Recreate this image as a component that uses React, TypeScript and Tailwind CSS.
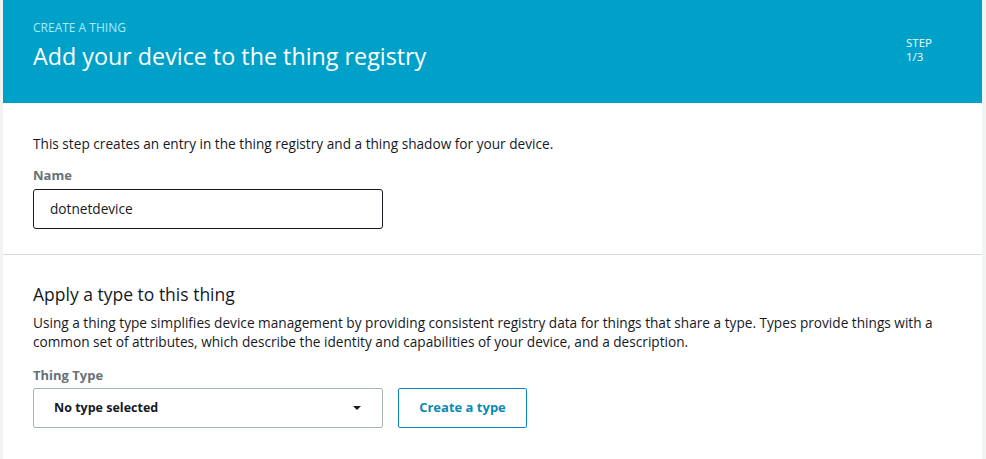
import React from 'react'

const font = { fontFamily: '"Open Sans", "Noto Sans", Arial, sans-serif' }

export default function App() {
  return (
    <div className="w-[986px] h-[459px] bg-[#f2f3f3] px-[3px] overflow-hidden" style={font}>
      <div className="h-full bg-white mr-[1px]">
        {/* Header */}
        <div className="h-[103px] bg-[#00a1c9] flex justify-between pl-[30px] pr-[50px]">
          <div className="pt-[20px]">
            <div className="text-[12px] leading-[16px] text-[#a6ecfb] uppercase">Create a thing</div>
            <h1 className="mt-[5px] text-[23.3px] leading-[30px] text-white">Add your device to the thing registry</h1>
          </div>
          <div className="pt-[36px] text-[11.5px] leading-[14px] text-[#effbfe]">
            <div>STEP</div>
            <div>1/3</div>
          </div>
        </div>

        {/* Name section */}
        <div className="px-[30px] pt-[32px] pb-[25px] border-b border-[#d5dbdb]">
          <p className="text-[13.65px] leading-[18px] text-[#16191f]">
            This step creates an entry in the thing registry and a thing shadow for your device.
          </p>
          <div className="mt-[14px] text-[13px] leading-[17px] font-bold text-[#687078]">Name</div>
          <div className="mt-[5px] w-[350px] h-[40px] border border-[#16191f] rounded-[3px] flex items-center px-[16px] text-[13.65px] text-[#16191f]">
            dotnetdevice
          </div>
        </div>

        {/* Type section */}
        <div className="px-[30px] pt-[27px]">
          <h2 className="text-[17.5px] leading-[24px] text-[#16191f]">Apply a type to this thing</h2>
          <p className="mt-[7px] text-[13.65px] leading-[19px] text-[#16191f] w-[930px]">
            Using a thing type simplifies device management by providing consistent registry data for things that share a type. Types provide things with a common set of attributes, which describe the identity and capabilities of your device, and a description.
          </p>
          <div className="mt-[16px] text-[13px] leading-[17px] font-bold text-[#687078]">Thing Type</div>
          <div className="mt-[4px] flex gap-[15px]">
            <div className="w-[350px] h-[40px] border border-[#aab7b8] rounded-[2px] flex items-center justify-between pl-[20px] pr-[21px] text-[12.5px] font-bold text-[#16191f]">
              <span>No type selected</span>
              <svg width="8" height="4" viewBox="0 0 8 4"><path d="M0 0h8L4 4z" fill="#16191f" /></svg>
            </div>
            <button className="w-[129px] h-[40px] border border-[#0a8ab0] rounded-[2px] text-[13px] font-bold text-[#0a8ab0] bg-white">
              Create a type
            </button>
          </div>
        </div>
      </div>
    </div>
  )
}
